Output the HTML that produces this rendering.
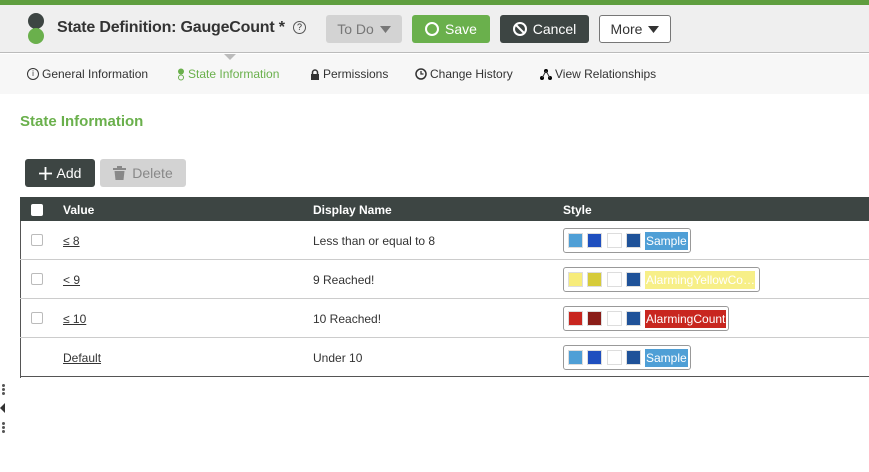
<!DOCTYPE html>
<html><head><style>
*{box-sizing:border-box;margin:0;padding:0}
body{width:869px;height:472px;overflow:hidden;background:#fff;font-family:"Liberation Sans",Arial,sans-serif;position:relative;color:#333}
.abs{position:absolute}
.topbar{left:0;top:0;width:869px;height:5px;background:#5f9e3f}
.header{left:0;top:5px;width:869px;height:48px;background:#efefef;border-bottom:1px solid #bbb}
.nav{left:0;top:54px;width:869px;height:40px;background:#f7f7f7}
.btn{position:absolute;top:15px;height:28px;border-radius:3px;font-size:14px;line-height:28px;display:flex;align-items:center;justify-content:center;gap:6px}
.navi{position:absolute;top:67px;font-size:12px;color:#333;display:flex;align-items:center;gap:3px;white-space:nowrap}
.th{position:absolute;top:203px;color:#fff;font-weight:bold;font-size:12px}
.row{position:absolute;left:20px;width:849px;height:39px;border-bottom:1px solid #ccc}
.cell{position:absolute;font-size:12px;top:13px}
.cb{position:absolute;left:11px;top:13px;width:12px;height:12px;border:1px solid #bbb;border-radius:2px;background:#fff}
.style{position:absolute;left:543px;top:7px;height:25px;border:1px solid #999;border-radius:3px;background:#fff}
.sw{position:absolute;top:4px;width:15px;height:15px;border:1px solid #ddd}
.lbl{position:absolute;left:81px;top:3px;height:18px;font-size:12px;line-height:18px;color:#fff;padding:0 1px;white-space:nowrap}
.dot{position:absolute;left:2px;width:3px;height:3px;background:#555;border-radius:50%}
</style></head><body>
<div class="abs topbar"></div>
<div class="abs header"></div>
<div class="abs" style="left:28px;top:13px;width:16px;height:16px;border-radius:50%;background:#3d4543"></div>
<div class="abs" style="left:28px;top:28px;width:16px;height:16px;border-radius:50%;background:#6ab04c"></div>
<div class="abs" style="left:57px;top:19px;font-size:16px;font-weight:bold;color:#333;letter-spacing:-0.2px;white-space:nowrap">State Definition: GaugeCount *</div>
<div class="abs" style="left:293px;top:21px;width:13px;height:13px;border:1px solid #555;border-radius:50%;font-size:9px;text-align:center;line-height:11px">?</div>
<div class="btn" style="left:326px;width:76px;background:#d3d3d3;color:#777">To Do <svg width="11" height="7"><path d="M0 0H11L5.5 7Z" fill="#777"/></svg></div>
<div class="btn" style="left:412px;width:78px;background:#6ab04c;color:#fff"><span style="width:14px;height:14px;border:2px solid #fff;border-radius:50%;display:inline-block"></span>Save</div>
<div class="btn" style="left:500px;width:89px;background:#3d4543;color:#fff"><svg width="14" height="14" viewBox="0 0 14 14"><circle cx="7" cy="7" r="6" fill="none" stroke="#fff" stroke-width="2"/><line x1="3" y1="3" x2="11" y2="11" stroke="#fff" stroke-width="2"/></svg>Cancel</div>
<div class="btn" style="left:599px;width:72px;background:#fff;border:1px solid #777;color:#333">More <svg width="11" height="7"><path d="M0 0H11L5.5 7Z" fill="#333"/></svg></div>
<div class="abs nav"></div>
<div class="abs" style="left:224px;top:54px;width:0;height:0;border-left:6px solid transparent;border-right:6px solid transparent;border-top:6px solid #bbb"></div>
<div class="navi" style="left:27px"><span style="width:12px;height:12px;border:1px solid #333;border-radius:50%;font-size:8px;text-align:center;line-height:10px">i</span>General Information</div>
<div class="navi" style="left:177px;color:#6ab04c"><svg width="8" height="13"><circle cx="4" cy="3.5" r="3" fill="#6ab04c"/><circle cx="4" cy="9.5" r="2.5" fill="none" stroke="#6ab04c"/></svg> State Information</div>
<div class="navi" style="left:310px"><svg width="10" height="11"><path d="M2.5 5V3.5a2.5 2.5 0 0 1 5 0V5" fill="none" stroke="#333" stroke-width="1.5"/><rect x="1" y="5" width="8" height="6" fill="#333"/></svg>Permissions</div>
<div class="navi" style="left:415px"><svg width="12" height="12"><circle cx="6" cy="6" r="5" fill="none" stroke="#333" stroke-width="1.5"/><path d="M6 3V6H8.5" fill="none" stroke="#333" stroke-width="1.3"/></svg>Change History</div>
<div class="navi" style="left:540px"><svg width="12" height="11"><circle cx="6" cy="2" r="2"/><circle cx="2" cy="9" r="2"/><circle cx="10" cy="9" r="2"/><path d="M6 2L2 9M6 2L10 9" stroke="#333"/></svg>View Relationships</div>
<div class="abs" style="left:20px;top:113px;font-size:15px;font-weight:bold;color:#6ab04c">State Information</div>
<div class="abs" style="left:25px;top:159px;width:70px;height:28px;background:#3d4543;border-radius:3px;color:#fff;font-size:14px;display:flex;align-items:center;justify-content:center;gap:5px"><svg width="13" height="13"><path d="M6.5 0V13M0 6.5H13" stroke="#fff" stroke-width="1.8"/></svg>Add</div>
<div class="abs" style="left:100px;top:159px;width:86px;height:28px;background:#d3d3d3;border-radius:3px;color:#888;font-size:14px;display:flex;align-items:center;justify-content:center;gap:6px"><svg width="13" height="14"><rect x="0" y="2" width="13" height="2" fill="#888"/><rect x="4" y="0" width="5" height="2" fill="#888"/><path d="M1.5 5H11.5L10.5 14H2.5Z" fill="#888"/></svg>Delete</div>
<div class="abs" style="left:20px;top:197px;width:849px;height:24px;background:#3d4543"></div>
<div class="abs" style="left:31px;top:204px;width:12px;height:12px;background:#fff;border-radius:2px"></div>
<div class="th" style="left:63px">Value</div>
<div class="th" style="left:313px">Display Name</div>
<div class="th" style="left:563px">Style</div>
<div class="abs" style="left:20px;top:221px;width:1px;height:157px;background:#555"></div>
<div class="row" style="top:221px"><div class="cb"></div><div class="cell" style="left:43px;text-decoration:underline">≤ 8</div><div class="cell" style="left:293px">Less than or equal to 8</div>
<div class="style" style="width:128px"><div class="sw" style="left:4px;background:#4f9fd6"></div><div class="sw" style="left:23px;background:#1f4fbf"></div><div class="sw" style="left:43px;background:#fff"></div><div class="sw" style="left:62px;background:#1f5299"></div><div class="lbl" style="background:#4f9fd6">Sample</div></div></div>
<div class="row" style="top:260px"><div class="cb"></div><div class="cell" style="left:43px;text-decoration:underline">&lt; 9</div><div class="cell" style="left:293px">9 Reached!</div>
<div class="style" style="width:197px"><div class="sw" style="left:4px;background:#f7ec7a"></div><div class="sw" style="left:23px;background:#d6cb3a"></div><div class="sw" style="left:43px;background:#fff"></div><div class="sw" style="left:62px;background:#1f5299"></div><div class="lbl" style="background:#f7ef88;width:110px;overflow:hidden">AlarmingYellowCo…</div></div></div>
<div class="row" style="top:299px"><div class="cb"></div><div class="cell" style="left:43px;text-decoration:underline">≤ 10</div><div class="cell" style="left:293px">10 Reached!</div>
<div class="style" style="width:166px"><div class="sw" style="left:4px;background:#c8261f"></div><div class="sw" style="left:23px;background:#8a1d18"></div><div class="sw" style="left:43px;background:#fff"></div><div class="sw" style="left:62px;background:#1f5299"></div><div class="lbl" style="background:#c8261f">AlarmingCount</div></div></div>
<div class="row" style="top:338px;border-bottom:1px solid #555"><div class="cell" style="left:43px;text-decoration:underline">Default</div><div class="cell" style="left:293px">Under 10</div>
<div class="style" style="width:128px"><div class="sw" style="left:4px;background:#4f9fd6"></div><div class="sw" style="left:23px;background:#1f4fbf"></div><div class="sw" style="left:43px;background:#fff"></div><div class="sw" style="left:62px;background:#1f5299"></div><div class="lbl" style="background:#4f9fd6">Sample</div></div></div>
<div class="dot" style="top:384px"></div><div class="dot" style="top:388px"></div><div class="dot" style="top:392px"></div>
<div class="abs" style="left:0;top:403px;border-top:5px solid transparent;border-bottom:5px solid transparent;border-right:5px solid #333"></div>
<div class="dot" style="top:422px"></div><div class="dot" style="top:426px"></div><div class="dot" style="top:430px"></div>
</body></html>
